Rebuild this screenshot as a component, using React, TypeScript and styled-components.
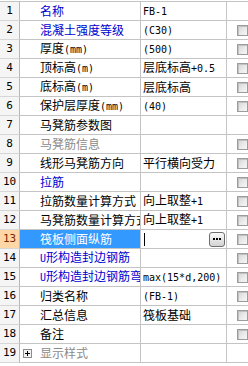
import React from 'react';
import styled, { createGlobalStyle, css } from 'styled-components';

const Global = createGlobalStyle`
  html, body { margin: 0; padding: 0; background: #ffffff; }
  body {
    width: 248px;
    height: 366px;
    overflow: hidden;
    font-family: "Noto Sans CJK SC", sans-serif;
  }
`;

type Tone = 'black' | 'blue' | 'gray';

const toneColor: Record<Tone, string> = {
  black: '#000000',
  blue: '#0000d0',
  gray: '#8a8a8a',
};

const Table = styled.div`
  width: 248px;
  margin-top: 1px;
  border-top: 1px solid #c4c4c4;
  overflow: hidden;
`;

const Row = styled.div`
  display: grid;
  grid-template-columns: 20px 121px 86px 21px;
  height: 19px;
`;

const cellBase = css`
  box-sizing: border-box;
  min-width: 0;
  height: 19px;
  border-bottom: 1px solid #c4c4c4;
  border-right: 1px solid #c4c4c4;
  display: flex;
  align-items: center;
  overflow: hidden;
  white-space: nowrap;
  font-size: 12px;
  line-height: 18px;
`;

const NumCell = styled.div<{ $active?: boolean }>`
  ${cellBase};
  justify-content: center;
  background: ${(p) => (p.$active ? '#ffd6a6' : '#f5f5f5')};
  color: ${(p) => (p.$active ? '#7a2a00' : '#000000')};
  border-bottom-color: #d6d6d6;
  border-right-color: #b8b8b8;
  font-family: "DejaVu Sans Mono", monospace;
  font-size: 11px;
`;

const NameCell = styled.div<{ $tone: Tone; $selected?: boolean }>`
  ${cellBase};
  padding-left: 20px;
  background: ${(p) => (p.$selected ? '#3399ff' : '#ffffff')};
  color: ${(p) => (p.$selected ? '#ffffff' : toneColor[p.$tone])};
`;

const NameText = styled.span`
  display: block;
  flex: 1;
  min-width: 0;
  overflow: hidden;
  white-space: nowrap;
`;

const ValueCell = styled.div<{ $accent?: boolean }>`
  ${cellBase};
  position: relative;
  padding-left: 2px;
  padding-right: 1px;
  color: #000000;
  ${(p) =>
    p.$accent &&
    css`
      &::before {
        content: '';
        position: absolute;
        left: 0;
        right: 0;
        top: -1px;
        height: 1px;
        background: #e2b77c;
      }
    `}
`;

const ValueText = styled.span`
  display: block;
  min-width: 0;
  overflow: hidden;
  white-space: nowrap;
`;

const CheckCell = styled.div`
  ${cellBase};
  border-right: none;
  padding-left: 10px;
`;

const Check = styled.span`
  display: block;
  flex: none;
  width: 11px;
  height: 11px;
  box-sizing: border-box;
  border: 1px solid #9c9c9c;
  background: linear-gradient(135deg, #d4d4d4 0%, #ececec 60%, #f6f6f6 100%);
  box-shadow: inset 1px 1px 0 #c2c2c2;
`;

const Latin = styled.span`
  font-family: "DejaVu Sans Mono", "Liberation Mono", monospace;
  font-size: 10px;
`;

const Expander = styled.span`
  position: relative;
  flex: none;
  width: 9px;
  height: 9px;
  box-sizing: border-box;
  border: 1px solid #8c8c8c;
  background: #f2f2f2;
  margin-left: -17px;
  margin-right: 8px;
  &::before {
    content: '';
    position: absolute;
    left: 1px;
    top: 3px;
    width: 5px;
    height: 1px;
    background: #000;
  }
  &::after {
    content: '';
    position: absolute;
    left: 3px;
    top: 1px;
    width: 1px;
    height: 5px;
    background: #000;
  }
`;

const EditBox = styled.div`
  flex: 1;
  display: flex;
  align-items: center;
  justify-content: space-between;
  height: 100%;
`;

const Caret = styled.span`
  display: block;
  width: 1px;
  height: 13px;
  background: #000;
  margin-left: 1px;
`;

const DotsButton = styled.span`
  display: flex;
  align-items: center;
  justify-content: center;
  gap: 1px;
  width: 16px;
  height: 15px;
  box-sizing: border-box;
  border: 1px solid #6f6f6f;
  border-radius: 3px;
  background: linear-gradient(#fbfbfb, #d2d2d2);
`;

const Dot = styled.span`
  width: 2px;
  height: 2px;
  background: #000;
`;

const splitText = (t: string) => {
  const parts: { latin: boolean; s: string }[] = [];
  for (const ch of t) {
    const latin = ch.charCodeAt(0) < 128;
    const last = parts[parts.length - 1];
    if (last && last.latin === latin) last.s += ch;
    else parts.push({ latin, s: ch });
  }
  return parts.map((p, i) => (p.latin ? <Latin key={i}>{p.s}</Latin> : <span key={i}>{p.s}</span>));
};

type RowData = {
  name: string;
  tone: Tone;
  value?: string;
  check: boolean;
  selected?: boolean;
  expander?: boolean;
};

const rows: RowData[] = [
  { name: '名称', tone: 'blue', value: 'FB-1', check: false },
  { name: '混凝土强度等级', tone: 'blue', value: '(C30)', check: true },
  { name: '厚度(mm)', tone: 'black', value: '(500)', check: true },
  { name: '顶标高(m)', tone: 'black', value: '层底标高+0.5', check: true },
  { name: '底标高(m)', tone: 'black', value: '层底标高', check: true },
  { name: '保护层厚度(mm)', tone: 'black', value: '(40)', check: true },
  { name: '马凳筋参数图', tone: 'black', check: false },
  { name: '马凳筋信息', tone: 'gray', check: true },
  { name: '线形马凳筋方向', tone: 'black', value: '平行横向受力', check: true },
  { name: '拉筋', tone: 'blue', check: true },
  { name: '拉筋数量计算方式', tone: 'black', value: '向上取整+1', check: true },
  { name: '马凳筋数量计算方式', tone: 'black', value: '向上取整+1', check: true },
  { name: '筏板侧面纵筋', tone: 'blue', check: true, selected: true },
  { name: 'U形构造封边钢筋', tone: 'blue', check: true },
  { name: 'U形构造封边钢筋弯折长度', tone: 'blue', value: 'max(15*d,200)', check: true },
  { name: '归类名称', tone: 'black', value: '(FB-1)', check: true },
  { name: '汇总信息', tone: 'black', value: '筏板基础', check: true },
  { name: '备注', tone: 'black', check: true },
  { name: '显示样式', tone: 'gray', check: false, expander: true },
];

export default function App() {
  return (
    <>
      <Global />
      <Table>
        {rows.map((r, i) => (
          <Row key={i}>
            <NumCell $active={r.selected}>{i + 1}</NumCell>
            <NameCell $tone={r.tone} $selected={r.selected}>
              {r.expander && <Expander />}
              <NameText>{splitText(r.name)}</NameText>
            </NameCell>
            <ValueCell $accent={i === 0}>
              {r.selected ? (
                <EditBox>
                  <Caret />
                  <DotsButton>
                    <Dot />
                    <Dot />
                    <Dot />
                  </DotsButton>
                </EditBox>
              ) : (
                r.value && <ValueText>{splitText(r.value)}</ValueText>
              )}
            </ValueCell>
            <CheckCell>{r.check && <Check />}</CheckCell>
          </Row>
        ))}
      </Table>
    </>
  );
}
